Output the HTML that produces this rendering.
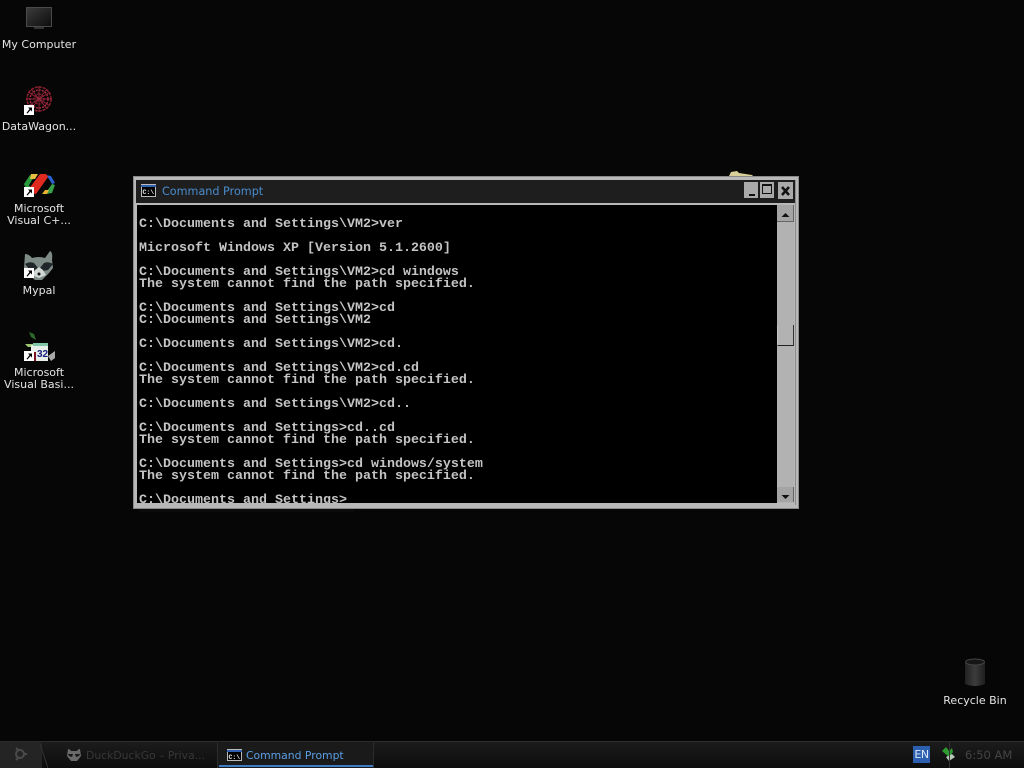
<!DOCTYPE html>
<html><head><meta charset="utf-8"><style>
html,body{margin:0;padding:0;background:#060606;width:1024px;height:768px;overflow:hidden}
div,svg{position:absolute}
.l{font:11px/12px "DejaVu Sans",sans-serif;color:#e4e4e4;text-align:center;width:80px;white-space:nowrap}
pre{position:absolute;margin:0;left:2px;top:14px;font:bold 13.33px/12px "Liberation Mono",monospace;color:#c4c4c4}
</style></head><body>
<svg style="left:0;top:0" width="1024" height="768">
<defs><linearGradient id="m" x1="0" y1="0" x2="1" y2="1"><stop offset="0" stop-color="#3c3c3c"/><stop offset="1" stop-color="#0c0c0c"/></linearGradient>
<linearGradient id="b" x1="0" x2="1"><stop offset="0" stop-color="#222"/><stop offset=".5" stop-color="#3c3c3c"/><stop offset="1" stop-color="#1e1e1e"/></linearGradient></defs>
<rect x="26.500" y="7.500" width="25" height="19" fill="url(#m)" stroke="#4a4a4a"/>
<rect x="34" y="27" width="10" height="2" fill="#333"/>
<!-- DataWagon -->
<g fill="none" stroke="#8c2030" stroke-width="1.500"><circle cx="39" cy="99" r="12" stroke-dasharray="3 1"/><circle cx="39" cy="99" r="9" stroke="#a82a40" stroke-dasharray="2 1"/><circle cx="39" cy="99" r="5" stroke="#701828" stroke-dasharray="2 1"/><path d="M28 92l22 14M28 106l22-14M39 86v26M26 99h26M31 89l16 20M47 89L31 109" stroke-width="1" stroke="#902438"/></g>
<!-- Visual C++ -->
<path d="M24 184l6-9 4 2-5 8 3 6-4 2z" fill="#2b9a3c"/><path d="M31 174h7l-3 5h-5z" fill="#e8c040"/><path d="M46 175l5 1 4 7-3 1-3-5z" fill="#2a60d0"/><path d="M55 185l-3 8-6 1 1-3 5-7z" fill="#38a048"/><path d="M46 174l2 3-12 17-6-1-2-3 12-16z" fill="#e02a20"/><path d="M42 194h5l2-4-4 0z" fill="#e8b030"/>
<!-- Mypal raccoon -->
<path d="M25 254q4 0 7 4 7-2 13 0l5-7q3 1 2 9l1 8-4 5-7 7h-7l-7-6-4-6z" fill="#7e8a86"/>
<path d="M25 264q5-3 9-1l4 5-3 3-5-1zM53 264q-5-3-9-1l-4 5 3 3 5-1z" fill="#20262a"/>
<path d="M35 270l4-3 4 3 3 5-7 3-7-3z" fill="#d0d6d2"/><circle cx="39" cy="274" r="1.500" fill="#111"/>
<!-- VB -->
<path d="M29 332l5 2 2 6-5-3z" fill="#2a6a2a"/><path d="M25 344l8 0 4 3-9 0z" fill="#a0c870"/>
<rect x="31" y="345" width="17" height="16" fill="#e8eee8"/><rect x="33" y="343" width="15" height="3" fill="#80c8a8"/><path d="M33 352h3v9h-3z" fill="#7a1020"/><path d="M48 356l7-5v7l-4 3z" fill="#a8a8a8"/>
<text x="37" y="357" font-family="Liberation Sans,sans-serif" font-weight="bold" font-size="10" fill="#1a2080">32</text>
<g id="s"><rect x="24" y="105" width="10" height="10" fill="#fff"/><path d="M26.500 113l3-4-1.500-1.500h4v4l-1.500-1.500-3 3.500z" fill="#000"/></g>
<use href="#s" y="82"/><use href="#s" y="163"/><use href="#s" y="246"/>
<!-- bin -->
<path d="M965 662v22q10 4 20 0v-22z" fill="url(#b)"/><ellipse cx="975" cy="662" rx="9.500" ry="3" fill="#161616" stroke="#444"/>
<path d="M729 176l2-4 6-1 2 2 13 2 1 1z" fill="#d8d098"/>
</svg>
<div class="l" style="left:-1px;top:39px">My Computer</div>
<div class="l" style="left:-1px;top:121px">DataWagon...</div>
<div class="l" style="left:-1px;top:203px">Microsoft<br>Visual C+...</div>
<div class="l" style="left:-1px;top:285px">Mypal</div>
<div class="l" style="left:-1px;top:367px">Microsoft<br>Visual Basi...</div>
<div class="l" style="left:935px;top:695px">Recycle Bin</div>

<!-- window -->
<div style="left:133px;top:176px;width:666px;height:333px;background:#b8b8b8;box-shadow:inset 0 0 0 1px #8a8a8a"></div>
<div style="left:136px;top:180px;width:659px;height:23px;background:#1e1e1e"></div>
<svg style="left:141px;top:184px" width="15" height="13"><rect width="15" height="13" fill="#bbb"/><rect y="1" width="15" height="2" fill="#3060b0"/><rect x="1" y="3" width="13" height="9" fill="#000"/><text x="1.500" y="10" font-family="Liberation Mono,monospace" font-weight="bold" font-size="6.500" fill="#eee">C:\</text></svg>
<div style="left:162px;top:184px;font:11.200px/15px 'DejaVu Sans',sans-serif;color:#4a8ccc">Command Prompt</div>
<!-- buttons -->
<div style="left:744px;top:182px;width:14px;height:16px;background:#aaa"></div>
<div style="left:749px;top:194px;width:6px;height:2px;background:#111"></div>
<div style="left:760px;top:182px;width:14px;height:16px;background:#aaa"></div>
<div style="left:762px;top:184px;width:10px;height:10px;border:1px solid #111;border-top-width:2px;box-sizing:border-box"></div>
<div style="left:778px;top:182px;width:15px;height:17px;background:#aaa"></div>
<svg style="left:778px;top:182px" width="15" height="17"><path d="M4 5l7 8M11 5l-7 8" stroke="#111" stroke-width="2.500"/></svg>
<!-- client -->
<div style="left:137px;top:205px;width:640px;height:298px;background:#000;overflow:hidden">
<pre>C:\Documents and Settings\VM2&gt;ver

Microsoft Windows XP [Version 5.1.2600]

C:\Documents and Settings\VM2&gt;cd windows
The system cannot find the path specified.

C:\Documents and Settings\VM2&gt;cd
C:\Documents and Settings\VM2

C:\Documents and Settings\VM2&gt;cd.

C:\Documents and Settings\VM2&gt;cd.cd
The system cannot find the path specified.

C:\Documents and Settings\VM2&gt;cd..

C:\Documents and Settings&gt;cd..cd
The system cannot find the path specified.

C:\Documents and Settings&gt;cd windows/system
The system cannot find the path specified.

C:\Documents and Settings&gt;</pre>
</div>
<!-- scrollbar -->
<div style="left:777px;top:205px;width:17px;height:298px;background:#b2b2b2"></div>
<div style="left:777px;top:205px;width:16px;height:16px;background:#a4a4a4;border-right:1px solid #666;border-bottom:1px solid #666"></div>
<div style="left:777px;top:487px;width:16px;height:15px;background:#a4a4a4;border-right:1px solid #666"></div>
<svg style="left:777px;top:205px" width="17" height="300"><path d="M8.500 8l4 4h-8z" fill="#111"/><path d="M8.500 294l4-4h-8z" fill="#111"/></svg>
<div style="left:777px;top:325px;width:15px;height:20px;border-left:1px solid #c4c4c4;border-right:1px solid #333;border-bottom:1px solid #222"></div>
<div style="left:795px;top:180px;width:1px;height:325px;background:#8c8c8c"></div>
<div style="left:139px;top:509px;width:215px;height:3px;background:#0b0b0b"></div>

<!-- taskbar -->
<div style="left:0;top:741px;width:1024px;height:27px;background:linear-gradient(#1c1c1c,#141414 50%,#0d0d0d);border-top:1px solid #2c2c2c;box-sizing:border-box"></div>
<div style="left:0;top:742px;width:42px;height:26px;background:#242424"></div>
<svg style="left:8px;top:744px" width="40" height="24"><g fill="none" stroke="#4a4a4a" stroke-width="2"><circle cx="12" cy="10" r="4"/><path d="M8 4l2 2M8 16l2-2M16 10h3"/></g><path d="M32 0l8 24" stroke="#333"/></svg>
<svg style="left:66px;top:746px" width="16" height="16"><path d="M2 3q2 0 3 2h6q1-2 3-2l1 7-4 5H5L1 10z" fill="#6a6a6a"/><path d="M2 8l5 0-1 3-3-1zM14 8H9l1 3 3-1z" fill="#161616"/></svg>
<div style="left:86px;top:748px;font:10.800px/15px 'DejaVu Sans',sans-serif;color:#383838;white-space:nowrap">DuckDuckGo – Priva...</div>
<div style="left:217px;top:742px;width:157px;height:26px;background:#1a1a1a;border-left:1px solid #2c2c2c;border-right:1px solid #2c2c2c;box-sizing:border-box"></div>
<div style="left:219px;top:765px;width:154px;height:2px;background:#3d7cc4"></div>
<svg style="left:227px;top:749px" width="15" height="12"><rect width="15" height="12" fill="#bbb"/><rect y="1" width="15" height="2" fill="#3060b0"/><rect x="1" y="3" width="13" height="8" fill="#000"/><text x="1.500" y="10" font-family="Liberation Mono,monospace" font-weight="bold" font-size="6.500" fill="#eee">C:\</text></svg>
<div style="left:246px;top:748px;font:10.800px/15px 'DejaVu Sans',sans-serif;color:#5a9fe6;white-space:nowrap">Command Prompt</div>
<!-- tray -->
<div style="left:913px;top:746px;width:17px;height:17px;background:#2d5fb0;font:11px/17px 'DejaVu Sans',sans-serif;color:#dce8f8;text-align:center;letter-spacing:-.5px">EN</div>
<svg style="left:941px;top:746px" width="15" height="16"><path d="M1 5l4-4 3 4 3-3 1 4-4 5z" fill="#2f9a30"/><path d="M5 11l6-3 3 3-6 4z" fill="#b8c8b8"/></svg>
<div style="left:949px;top:742px;width:1px;height:26px;background:#333"></div>
<div style="left:965px;top:748px;font:11.500px/15px 'DejaVu Sans',sans-serif;color:#444;white-space:nowrap">6:50 AM</div>
</body></html>
